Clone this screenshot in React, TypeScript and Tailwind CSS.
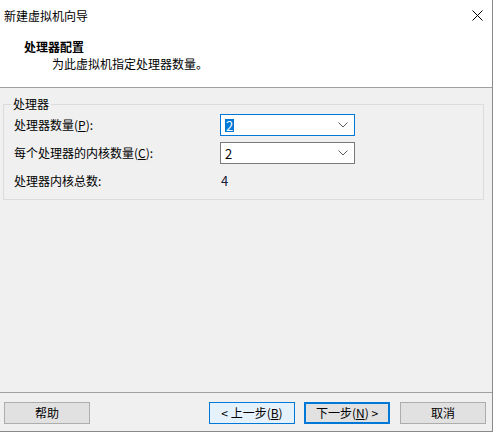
import React from "react";

const font = { fontFamily: '"Noto Sans CJK SC", "Noto Sans", sans-serif' };

const Chevron = () => (
  <svg width="10" height="6" viewBox="0 0 10 6" className="shrink-0">
    <path d="M0.5 0.5 L5 5 L9.5 0.5" fill="none" stroke="#5a5a5a" strokeWidth="1" />
  </svg>
);

const Combo = ({ value, focused }: { value: string; focused?: boolean }) => (
  <div
    className={`w-[135px] h-[22px] bg-white flex items-center justify-between pl-[4px] pr-[6px] border ${
      focused ? "border-[#0078d7]" : "border-[#7a7a7a]"
    }`}
  >
    {focused ? (
      <span className="bg-[#0078d7] text-white leading-[13px] h-[13px] px-[1px] text-[13px]">{value}</span>
    ) : (
      <span className="text-black text-[13px] leading-[13px]">{value}</span>
    )}
    <Chevron />
  </div>
);

const Btn = ({
  children,
  kind = "normal",
}: {
  children: React.ReactNode;
  kind?: "normal" | "hover" | "default";
}) => {
  const cls =
    kind === "hover"
      ? "bg-[#e5f1fb] border border-[#0078d7]"
      : kind === "default"
      ? "bg-[#e1e1e1] border-2 border-[#0078d7]"
      : "bg-[#e1e1e1] border border-[#adadad]";
  return (
    <div className={`w-[86px] h-[22px] flex items-center justify-center text-[12px] text-black ${cls}`}>
      {children}
    </div>
  );
};

export default function App() {
  return (
    <div className="w-[495px] h-[436px] bg-white overflow-hidden" style={font}>
      <div className="w-[493px] h-[432px] flex flex-col border-r border-b border-[#8a8a8a]">
        {/* header */}
        <div className="h-[87px] bg-white flex flex-col">
          <div className="flex items-start justify-between pl-[4px] pr-[9px] pt-[8px]">
            <span className="text-[12px] leading-[15px] text-black">新建虚拟机向导</span>
            <svg width="11" height="11" viewBox="0 0 11 11" className="mt-[2px]">
              <path d="M0.5 0.5 L10.5 10.5 M10.5 0.5 L0.5 10.5" stroke="#000" strokeWidth="1" />
            </svg>
          </div>
          <div className="pl-[24px] pt-[17px] text-[12px] leading-[14px] font-bold text-black">处理器配置</div>
          <div className="pl-[52px] pt-[3px] text-[12px] leading-[14px] text-black">为此虚拟机指定处理器数量。</div>
        </div>
        <div className="h-px bg-[#a0a0a0]" />

        {/* body */}
        <div className="flex-1 bg-[#f0f0f0] flex flex-col">
          <div className="pt-[16px] pl-[3px]">
            <div className="relative w-[481px] h-[96px] border border-[#dcdcdc]">
              <span className="absolute top-[-8px] left-[7px] bg-[#f0f0f0] px-[2px] text-[12px] leading-[14px] text-black">
                处理器
              </span>
              <div className="pl-[10px] pt-[9px] flex flex-col">
                <div className="flex items-center h-[22px]">
                  <span className="w-[206px] text-[12px] text-black">
                    处理器数量(<span className="underline">P</span>):
                  </span>
                  <Combo value="2" focused />
                </div>
                <div className="flex items-center h-[22px] mt-[6px]">
                  <span className="w-[206px] text-[12px] text-black">
                    每个处理器的内核数量(<span className="underline">C</span>):
                  </span>
                  <Combo value="2" />
                </div>
                <div className="flex items-center h-[14px] mt-[10px]">
                  <span className="w-[206px] text-[12px] text-black">处理器内核总数:</span>
                  <span className="text-[13px] text-[#1a1a3a] pl-[1px]">4</span>
                </div>
              </div>
            </div>
          </div>

          <div className="flex-1" />
          <div className="h-px bg-[#a0a0a0]" />
          <div className="flex items-center pl-[4px] pt-[9px] pb-[7px]">
            <Btn>帮助</Btn>
            <div className="ml-[119px]">
              <Btn kind="hover">&lt; 上一步(<span className="underline">B</span>)</Btn>
            </div>
            <div className="ml-[9px]">
              <Btn kind="default">下一步(<span className="underline">N</span>) &gt;</Btn>
            </div>
            <div className="ml-[10px]">
              <Btn>取消</Btn>
            </div>
          </div>
        </div>
      </div>
    </div>
  );
}
